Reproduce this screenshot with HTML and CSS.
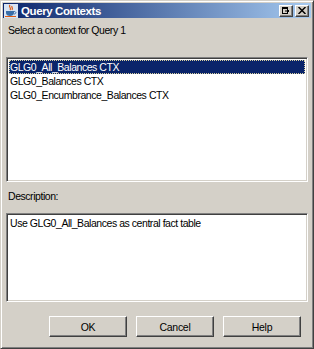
FILE: index.html
```html
<!DOCTYPE html>
<html lang="en">
<head>
    <meta charset="UTF-8">
    <title>Query Contexts</title>
    <link rel="stylesheet" href="styles.css">
</head>
<body>
    <div class="window">
        <div class="title-bar">
            <!-- Icono de Java -->
            <svg class="app-icon" viewBox="0 0 14 14" width="14" height="14">
                <rect x="0" y="0" width="14" height="14" fill="#d8e4f4"/>
                <path d="M6 1 C4 3 8 4 6 6 M8 2 C7 3.5 9.5 4 8 6" stroke="#e05a10" stroke-width="1.2" fill="none"/>
                <path d="M2 7 H10 V9 C10 11 8 12 6 12 C4 12 2 11 2 9 Z" fill="#3a6ea8"/>
                <path d="M10 7.5 C12.5 7.5 12.5 10 10 10" stroke="#3a6ea8" stroke-width="1" fill="none"/>
                <rect x="1" y="12" width="11" height="1" fill="#e05a10"/>
            </svg>
            <span class="title">Query Contexts</span>
            <div class="title-buttons">
                <button class="title-btn" aria-label="Restore">
                    <svg viewBox="0 0 8 7" width="8" height="7">
                        <rect x="0.5" y="0.5" width="5" height="6" fill="none" stroke="#000"/>
                        <rect x="0" y="0" width="6" height="2" fill="#000"/>
                        <path d="M3 4 H7 M5.5 2.5 L7 4 L5.5 5.5" stroke="#000" fill="none"/>
                    </svg>
                </button>
                <button class="title-btn" aria-label="Close">
                    <svg viewBox="0 0 8 7" width="8" height="7">
                        <path d="M0.5 0 L7.5 7 M7.5 0 L0.5 7" stroke="#000" stroke-width="1.5"/>
                    </svg>
                </button>
            </div>
        </div>

        <div class="content">
            <p class="label first">Select a context for Query 1</p>
            <ul class="field list">
                <li class="selected"><span>GLG0_All_Balances CTX</span></li>
                <li><span>GLG0_Balances CTX</span></li>
                <li><span>GLG0_Encumbrance_Balances CTX</span></li>
            </ul>
            <p class="label">Description:</p>
            <div class="field description">Use GLG0_All_Balances as central fact table</div>
            <div class="button-row">
                <button class="btn">OK</button>
                <button class="btn">Cancel</button>
                <button class="btn">Help</button>
            </div>
        </div>
    </div>
</body>
</html>
```
FILE: styles.css
```css
body {
    margin: 0;
    background: #d4d0c8;
    font-family: "Liberation Sans", Arial, sans-serif;
    font-size: 10.5px;
    letter-spacing: -0.45px;
    color: #000;
}

.window {
    width: 314px;
    height: 349px;
    box-sizing: border-box;
    border: 1px solid;
    border-color: #d4d0c8 #404040 #404040 #d4d0c8;
    box-shadow: inset 1px 1px #ffffff, inset -1px -1px #808080;
    padding: 2px;
    background: #d4d0c8;
    display: flex;
    flex-direction: column;
}

/* Barra de título */
.title-bar {
    height: 15px;
    display: flex;
    align-items: center;
    background: linear-gradient(90deg, #0a246a, #a6caf0);
    padding: 0 2px 0 1px;
}

.app-icon {
    margin-right: 3px;
}

.title {
    color: #ffffff;
    font-weight: bold;
    font-size: 11.5px;
    letter-spacing: -0.4px;
    flex: 1;
}

.title-buttons {
    display: flex;
    gap: 2px;
}

.title-btn {
    width: 14px;
    height: 12px;
    padding: 0;
    border: 1px solid;
    border-color: #ffffff #404040 #404040 #ffffff;
    box-shadow: inset -1px -1px #808080;
    background: #d4d0c8;
    display: flex;
    align-items: center;
    justify-content: center;
}

.title-btn svg {
    display: block;
}

/* Contenido */
.content {
    flex: 1;
    display: flex;
    flex-direction: column;
    padding: 0 3px 0 3px;
}

.label {
    margin: 8px 0 0 2px;
    height: 13px;
    line-height: 13px;
}

.label.first {
    margin-top: 6px;
    margin-bottom: 20px;
}

.field {
    background: #ffffff;
    border: 1px solid;
    border-color: #808080 #ffffff #ffffff #808080;
    box-shadow: inset 1px 1px #404040, inset -1px -1px #d4d0c8;
    box-sizing: border-box;
    margin: 0;
}

.list {
    height: 125px;
    list-style: none;
    padding: 2px 2px;
}

.list li {
    height: 14px;
    line-height: 14px;
    padding-left: 1px;
    box-sizing: border-box;
    white-space: nowrap;
}

.list li.selected {
    background: #0a246a;
    color: #ffffff;
    border: 1px dotted #d8d0a0;
    line-height: 12px;
    padding-left: 0;
}

.description {
    margin-top: 10px;
    height: 89px;
    padding: 3px 3px;
    line-height: 13px;
}

.button-row {
    display: flex;
    justify-content: flex-end;
    gap: 9px;
    margin-top: 14px;
    padding-right: 7px;
}

.btn {
    width: 78px;
    height: 21px;
    padding: 0;
    font-family: "Liberation Sans", Arial, sans-serif;
    font-size: 10.5px;
    letter-spacing: -0.3px;
    color: #000;
    background: #d4d0c8;
    border: 1px solid;
    border-color: #ffffff #404040 #404040 #ffffff;
    box-shadow: inset -1px -1px #808080;
}
```
